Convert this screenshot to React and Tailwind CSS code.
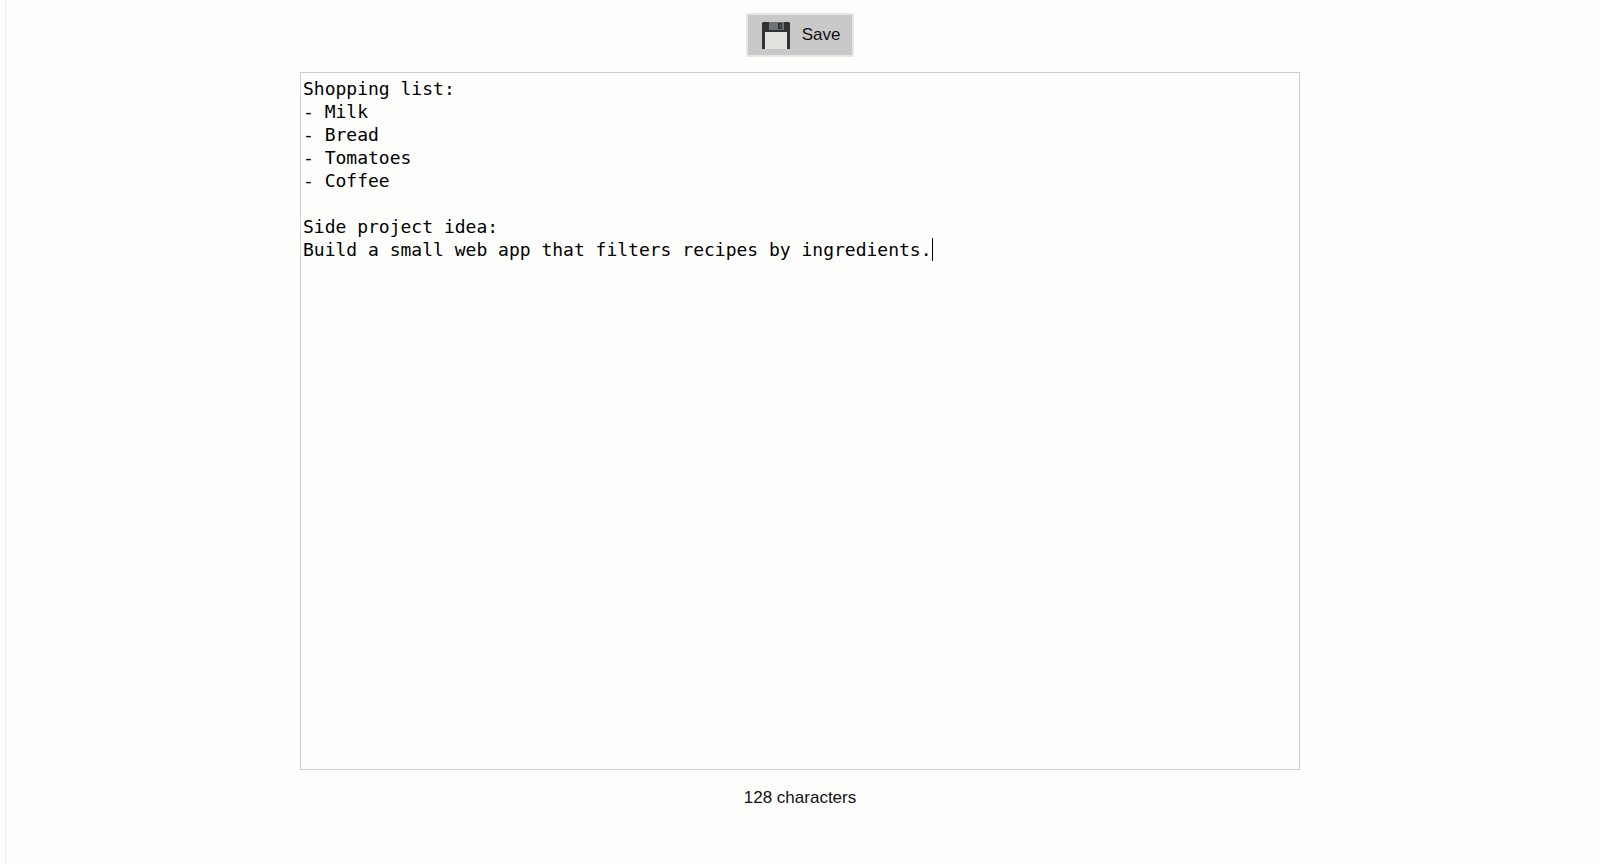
import { useState } from "react";

const LINE_HEIGHT = 23;

const initialText = `Shopping list:
- Milk
- Bread
- Tomatoes
- Coffee

Side project idea:
Build a small web app that filters recipes by ingredients.`;

const FloppyIcon = () => (
  <svg
    width="28"
    height="28"
    viewBox="0 0 28 28"
    aria-hidden="true"
    className="shrink-0"
  >
    <path d="M1 1h26l1 1v26H0V2z" fill="#303234" />
    <path d="M7 1h15v8H7z" fill="#6f7173" />
    <path d="M16 2h4v6h-4z" fill="#303234" />
    <path d="M18 3h1v4h-1z" fill="#5a5c5e" />
    <path d="M3 11h22v17H3z" fill="#e1e2dd" />
  </svg>
);

function App() {
  const [text, setText] = useState(initialText);
  const [caret, setCaret] = useState(initialText.length);

  const linesBefore = text.slice(0, caret).split("\n");
  const row = linesBefore.length - 1;
  const column = linesBefore[row].length;

  const handleChange = (e) => {
    setText(e.target.value);
    setCaret(e.target.selectionStart);
  };

  return (
    <div className="flex min-h-screen bg-[#fefefd] pr-1.5 pl-[5px] font-['Liberation_Sans',Arial,sans-serif] text-[17px] text-[#111111]">
      <main className="flex flex-1 flex-col items-center border-l border-[#ececec] pt-[13px] pb-[54px]">
        {/* Toolbar */}
        <button
          type="button"
          className="flex h-11 cursor-pointer items-center gap-3 rounded-xs border-2 border-[#e6e6e6] bg-[#c9c9c9] pr-3 pl-[14px]"
        >
          <FloppyIcon />
          Save
        </button>

        {/* Editor */}
        <div className="relative mt-[15px] flex w-full max-w-[1000px] flex-1 border border-[#cfcfcf] font-['DejaVu_Sans_Mono',monospace] text-[18px] leading-[23px] text-black">
          <textarea
            aria-label="Note"
            spellCheck={false}
            value={text}
            onChange={handleChange}
            onSelect={(e) => setCaret(e.target.selectionStart)}
            className="w-full flex-1 resize-none bg-transparent px-0.5 pt-1 caret-transparent outline-none"
          />
          <span
            className="pointer-events-none absolute top-1 left-0.5 h-[23px] w-px bg-black"
            style={{
              marginLeft: `${column}ch`,
              marginTop: row * LINE_HEIGHT,
            }}
          />
        </div>

        <p className="mt-4 leading-6">{text.length} characters</p>
      </main>
    </div>
  );
}

export default App;
